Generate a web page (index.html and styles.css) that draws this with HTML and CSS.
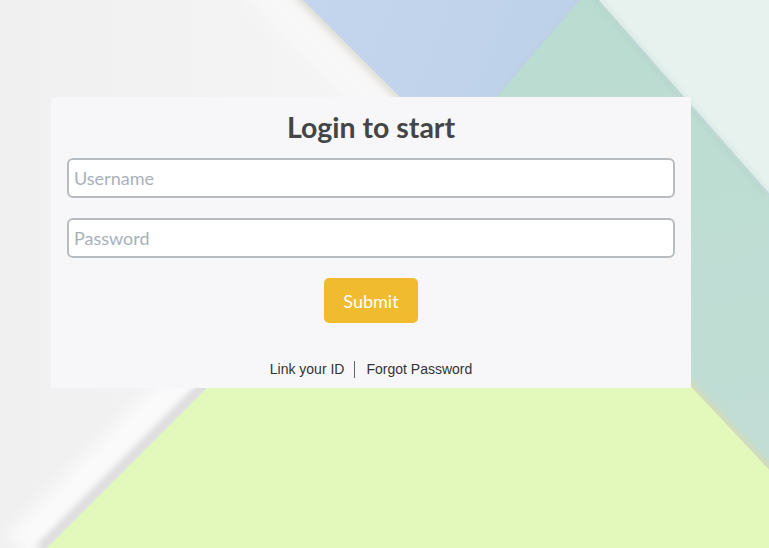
FILE: index.html
```html
<!DOCTYPE html>
<html lang="en">
<head>
<meta charset="utf-8">
<title>Login to start</title>
<link rel="stylesheet" href="styles.css">
</head>
<body>
<div class="bg" aria-hidden="true">
  <svg viewBox="0 0 769 548" width="769" height="548" preserveAspectRatio="none">
    <defs>
      <linearGradient id="base" x1="0" y1="0" x2="1" y2="0">
        <stop offset="0" stop-color="#f0f0f0"/>
        <stop offset="0.4" stop-color="#f4f4f4"/>
        <stop offset="1" stop-color="#f5f5f5"/>
      </linearGradient>
      <linearGradient id="teal" x1="0" y1="0" x2="0.3" y2="1">
        <stop offset="0" stop-color="#b9dccf"/>
        <stop offset="1" stop-color="#c1ddd5"/>
      </linearGradient>
      <linearGradient id="blue" x1="0" y1="0" x2="1" y2="0.4">
        <stop offset="0" stop-color="#c3d6ed"/>
        <stop offset="1" stop-color="#b9cde7"/>
      </linearGradient>
      <filter id="blur2" x="-20%" y="-20%" width="140%" height="140%"><feGaussianBlur stdDeviation="2"/></filter>
      <filter id="blur3" x="-20%" y="-20%" width="140%" height="140%"><feGaussianBlur stdDeviation="3"/></filter>
      <filter id="blur8" x="-20%" y="-20%" width="140%" height="140%"><feGaussianBlur stdDeviation="8"/></filter>
    </defs>
    <rect x="0" y="0" width="769" height="548" fill="url(#base)"/>
    <!-- paper highlight + shadow left of blue -->
    <line x1="250" y1="-20" x2="740" y2="470" stroke="#f8f8f8" stroke-width="30" filter="url(#blur8)"/>
    <line x1="295" y1="-8" x2="775" y2="472" stroke="#dedcd2" stroke-width="8" filter="url(#blur3)"/>
    <polygon points="303,0 769,0 769,466" fill="url(#blue)"/>
    <!-- teal -->
    <line x1="584" y1="-2" x2="500" y2="96" stroke="#bccfe0" stroke-width="6" filter="url(#blur3)"/>
    <polygon points="580,0 597,0 769,195.5 769,548 109,548" fill="url(#teal)"/>
    <line x1="596" y1="-4" x2="768" y2="192" stroke="#b0cfc5" stroke-width="6" filter="url(#blur3)"/>
    <polygon points="599,0 769,0 769,193" fill="#e7f2ee"/>
    <line x1="601" y1="0" x2="771" y2="194" stroke="#d6e8e1" stroke-width="3" filter="url(#blur2)"/>
    <!-- lime shadow -->
    <line x1="430" y1="140" x2="20" y2="550" stroke="#fafafa" stroke-width="40" filter="url(#blur8)"/>
    <line x1="452" y1="138" x2="40" y2="550" stroke="#dddddd" stroke-width="12" filter="url(#blur3)"/>
    <line x1="457" y1="138" x2="780" y2="482" stroke="#d8dcb4" stroke-width="8" filter="url(#blur3)"/>
    <polygon points="457,138 775,476 775,548 47,548" fill="#e2f9bb"/>
  </svg>
</div>

<main class="card">
  <h1 class="title">Login to start</h1>
  <form class="form">
    <input class="field" type="text" placeholder="Username">
    <input class="field" type="password" placeholder="Password">
    <button class="submit" type="button">Submit</button>
  </form>
  <nav class="links">
    <a href="#" class="link">Link your ID</a>
    <span class="sep"></span>
    <a href="#" class="link">Forgot Password</a>
  </nav>
</main>
</body>
</html>
```
FILE: styles.css
```css
html, body {
  margin: 0;
  padding: 0;
  width: 100%;
  height: 100%;
  overflow: hidden;
}

body {
  font-family: "Lato", "Liberation Sans", Arial, sans-serif;
  background: #f3f3f3;
}

.bg {
  position: fixed;
  inset: 0;
  z-index: -1;
}

.bg svg {
  display: block;
  width: 100%;
  height: 100%;
}

.card {
  box-sizing: border-box;
  width: 640px;
  margin: 97px 0 0 51px;
  padding: 13px 16px 9px;
  background: #f7f7f9;
  display: flex;
  flex-direction: column;
}

.title {
  margin: 0 0 14px;
  font-family: "Lato", sans-serif;
  font-weight: 700;
  font-size: 28.5px;
  line-height: 34px;
  color: #444546;
  text-align: center;
}

.form {
  display: flex;
  flex-direction: column;
  gap: 20px;
  margin: 0;
}

.field {
  box-sizing: border-box;
  width: 100%;
  height: 40px;
  padding: 0 5px;
  border: 2px solid #b8bcc1;
  border-radius: 6px;
  background: #ffffff;
  font-family: "Lato", sans-serif;
  font-size: 18px;
  color: #333;
  outline: none;
}

.field::placeholder {
  color: #a8b1ba;
  opacity: 1;
}

.submit {
  align-self: center;
  width: 94px;
  height: 45px;
  border: none;
  border-radius: 5px;
  background: #f0bb2e;
  color: #ffffff;
  font-family: "Lato", sans-serif;
  font-size: 18px;
  padding: 0;
  cursor: pointer;
}

.links {
  margin-top: 36px;
  display: flex;
  justify-content: center;
  align-items: center;
  height: 20px;
  font-family: "Liberation Sans", Arial, sans-serif;
  font-size: 14px;
  line-height: 20px;
}

.link {
  color: #333333;
  text-decoration: none;
}

.sep {
  display: inline-block;
  width: 0;
  height: 17px;
  border-left: 1px solid #666;
  margin: 0 11px 0 10px;
}
```
